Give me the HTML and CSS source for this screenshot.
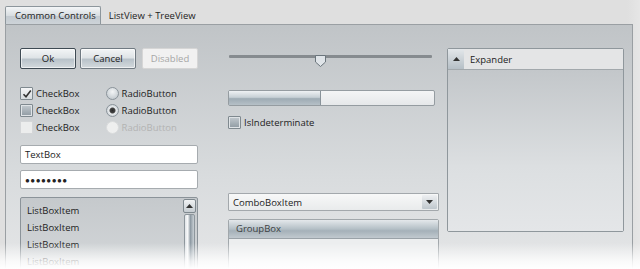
FILE: index.html
```html
<!DOCTYPE html>
<html lang="en">
<head>
    <meta charset="UTF-8">
    <meta name="viewport" content="width=device-width, initial-scale=1.0">
    <title>Common Controls</title>
    <link rel="stylesheet" href="styles.css">
</head>
<body>
    <div class="window">
        <div class="tabs">
            <div class="tab active">Common Controls</div>
            <div class="tab">ListView + TreeView</div>
        </div>
        <div class="panel">
            <div class="col col-left">
                <div class="buttons">
                    <button class="button focused">Ok</button>
                    <button class="button">Cancel</button>
                    <button class="button disabled">Disabled</button>
                </div>
                <div class="checks">
                    <div class="check-col">
                        <div class="check"><span class="box checked"><svg width="10" height="10" viewBox="0 0 10 10"><path d="M1.5 5.2 L4 7.8 L8.8 1.5" fill="none" stroke="#333" stroke-width="1.6"/></svg></span>CheckBox</div>
                        <div class="check"><span class="box mixed"></span>CheckBox</div>
                        <div class="check"><span class="box off"></span>CheckBox</div>
                    </div>
                    <div class="check-col">
                        <div class="check"><span class="radio"></span>RadioButton</div>
                        <div class="check"><span class="radio on"></span>RadioButton</div>
                        <div class="check dim"><span class="radio off"></span>RadioButton</div>
                    </div>
                </div>
                <div class="textbox">TextBox</div>
                <div class="textbox password">●●●●●●●●</div>
                <div class="listbox">
                    <div class="items">
                        <div class="item">ListBoxItem</div>
                        <div class="item">ListBoxItem</div>
                        <div class="item">ListBoxItem</div>
                        <div class="item">ListBoxItem</div>
                    </div>
                    <div class="scrollbar">
                        <div class="scroll-up"><svg width="7" height="4" viewBox="0 0 7 4"><path d="M0 4 L3.5 0 L7 4 Z" fill="#333"/></svg></div>
                        <div class="scroll-thumb"></div>
                    </div>
                </div>
            </div>
            <div class="col col-mid">
                <div class="slider">
                    <div class="track"></div>
                    <svg class="thumb" width="11" height="12" viewBox="0 0 11 12"><path d="M0.5 0.5 H10.5 V7 L5.5 11.5 L0.5 7 Z" fill="#dfe4e8" stroke="#6b757c"/></svg>
                </div>
                <div class="progress"><div class="progress-fill"></div></div>
                <div class="check indet"><span class="box mixed"></span>IsIndeterminate</div>
                <div class="combo">
                    <span>ComboBoxItem</span>
                    <span class="combo-btn"><svg width="7" height="4" viewBox="0 0 7 4"><path d="M0 0 L3.5 4 L7 0 Z" fill="#333"/></svg></span>
                </div>
                <div class="groupbox">
                    <div class="group-header">GroupBox</div>
                </div>
            </div>
            <div class="col col-right">
                <div class="expander">
                    <div class="exp-header">
                        <span class="exp-btn"><svg width="7" height="4" viewBox="0 0 7 4"><path d="M0 4 L3.5 0 L7 4 Z" fill="#333"/></svg></span>
                        Expander
                    </div>
                    <div class="exp-body"></div>
                </div>
            </div>
        </div>
        <div class="fade"></div>
    </div>
</body>
</html>
```

FILE: styles.css
```css
body {
    margin: 0;
    font-family: "Open Sans", "Noto Sans", sans-serif;
    font-size: 9.5px;
    color: #222;
    background: #dfdfdf;
    overflow: hidden;
}
.window {
    position: relative;
    height: 269px;
    overflow: hidden;
    background: linear-gradient(to right, #dfdfdf 98%, #e6e6e6);
}
.tabs {
    display: flex;
    align-items: flex-end;
    padding: 6px 0 0 5px;
    height: 18px;
}
.tab {
    padding: 0 8px;
    line-height: 17px;
    height: 17px;
}
.tab.active {
    border: 1px solid #8d969c;
    border-bottom: none;
    border-radius: 2px 2px 0 0;
    background: linear-gradient(#f4f6f7, #d8dde1 50%, #c3cad0 51%, #cdd3d8);
    padding: 0 4px 0 9px;
}
.panel {
    display: grid;
    grid-template-columns: 178px 211px 176px;
    column-gap: 30px;
    margin: 0 7px 0 5px;
    padding: 23px 0 0 14px;
    height: 260px;
    border: 1px solid #9a9fa3;
    box-sizing: border-box;
    background: linear-gradient(#c0c4c7, #d9dcde 60%, #e6e7e8);
}
.col-right {
    margin-left: -22px;
}
.buttons {
    display: flex;
    gap: 4px;
}
.button {
    width: 57px;
    height: 21px;
    font: inherit;
    color: #222;
    border: 1px solid #707a82;
    border-radius: 2px;
    background: linear-gradient(#f3f5f6, #dfe4e7 45%, #b9c3ca 55%, #d3d9dd);
    box-shadow: inset 0 0 0 1px rgba(255,255,255,0.6);
    padding: 0;
}
.button.focused {
    border-color: #3e4a53;
}
.button.disabled {
    margin-left: 2px;
    color: #a6a6a6;
    background: #f1f1f1;
    border-color: #d6d6d6;
    box-shadow: none;
}
.checks {
    display: flex;
    gap: 26px;
    margin-top: 16px;
}
.check {
    display: flex;
    align-items: center;
    height: 17px;
}
.box {
    width: 11px;
    height: 11px;
    margin-right: 3px;
    border: 1px solid #7f898f;
    border-radius: 1px;
    background: linear-gradient(#f5f6f7, #d6dbde);
    display: flex;
    align-items: center;
    justify-content: center;
}
.box.mixed {
    box-shadow: inset 0 0 0 1px #dfe3e6;
    background: linear-gradient(#c3cacf, #8f9aa2);
}
.box.off {
    border-color: #d4d6d8;
    background: #eceded;
}
.radio {
    width: 11px;
    height: 11px;
    margin-right: 3px;
    border: 1px solid #8a939a;
    border-radius: 50%;
    background: radial-gradient(circle at 50% 35%, #f3f5f6, #b8c0c6);
}
.radio.on {
    background: radial-gradient(circle, #2a2a2a 0, #444 2.5px, #e8ebed 3.5px, #b8c0c6);
}
.radio.off {
    border-color: #d9dbdc;
    background: #eeefef;
}
.dim {
    color: #b3b3b3;
}
.textbox {
    margin-top: 9px;
    height: 17px;
    line-height: 17px;
    padding-left: 4px;
    border: 1px solid #a6abaf;
    border-radius: 2px;
    background: #fff;
}
.password {
    margin-top: 6px;
    font-size: 8px;
    letter-spacing: 0.5px;
}
.listbox {
    display: flex;
    margin-top: 8px;
    height: 90px;
    border: 1px solid #8b9399;
    border-radius: 2px;
    background: linear-gradient(#c5c9cc, #d7dadc);
}
.items {
    flex: 1;
    padding: 4px 0 0 6px;
}
.item {
    height: 17px;
    line-height: 17px;
}
.scrollbar {
    width: 13px;
    margin: 1px 1px 0 0;
}
.scroll-up {
    height: 12px;
    border: 1px solid #7f898f;
    border-radius: 2px;
    background: linear-gradient(#f0f2f3, #c5ccd1);
    display: flex;
    align-items: center;
    justify-content: center;
}
.scroll-thumb {
    height: 80px;
    margin: 1px 1px 0;
    border: 1px solid #8d969c;
    border-radius: 2px;
    background: linear-gradient(to right, #dfe3e6, #f8f9fa 30%, #8e9aa3 60%, #c9d0d5);
}
.slider {
    position: relative;
    height: 14px;
    margin-top: 7px;
}
.track {
    margin: 6px 7px 0 1px;
    height: 3px;
    border-radius: 1px;
    background: #868b8f;
}
.thumb {
    position: absolute;
    left: 87px;
    top: 0;
}
.progress {
    margin: 21px 4px 0 0;
    height: 14px;
    border: 1px solid #959ca1;
    border-radius: 2px;
    background: linear-gradient(#f4f5f6, #e6e8ea);
}
.progress-fill {
    width: 91px;
    height: 100%;
    border-right: 1px solid #89939a;
    background: linear-gradient(#eef1f3, #c7d0d6 45%, #9eabb4 55%, #b6c0c7);
}
.indet {
    margin-top: 8px;
}
.combo {
    display: flex;
    align-items: center;
    justify-content: space-between;
    margin-top: 62px;
    height: 16px;
    padding-left: 4px;
    border: 1px solid #a3a8ac;
    border-radius: 1px;
    background: linear-gradient(#f7f8f8, #e9ebec);
}
.combo-btn {
    width: 15px;
    height: 14px;
    margin-right: 1px;
    display: flex;
    align-items: center;
    justify-content: center;
    background: linear-gradient(#eef0f2, #bfc7cd);
    border-radius: 1px;
}
.groupbox {
    margin-top: 8px;
    height: 60px;
    border: 1px solid #a1a7ab;
    border-radius: 2px;
    background: #eceeef;
}
.group-header {
    height: 18px;
    line-height: 18px;
    padding-left: 7px;
    color: #3b3f42;
    border-bottom: 1px solid #9aa2a8;
    background: linear-gradient(#e4e8eb, #b4bfc6 50%, #a5b1b9 60%, #c1c9cf);
}
.expander {
    width: 175px;
    height: 182px;
    border: 1px solid #8f979c;
    border-radius: 2px;
    display: flex;
    flex-direction: column;
}
.exp-header {
    display: flex;
    align-items: center;
    height: 20px;
    background: #e4e5e6;
    border-bottom: 1px solid #a2a8ac;
}
.exp-btn {
    width: 16px;
    height: 20px;
    margin-right: 6px;
    display: flex;
    align-items: center;
    justify-content: center;
    background: linear-gradient(#e3e7ea, #b5bfc6);
}
.exp-body {
    flex: 1;
    background: linear-gradient(#c3c7ca, #dcdfe1 60%, #e4e6e8);
}
.fade {
    position: absolute;
    left: 0;
    right: 0;
    bottom: 0;
    height: 26px;
    background: linear-gradient(rgba(255,255,255,0), rgba(255,255,255,0.8) 70%, #fff);
}
```
